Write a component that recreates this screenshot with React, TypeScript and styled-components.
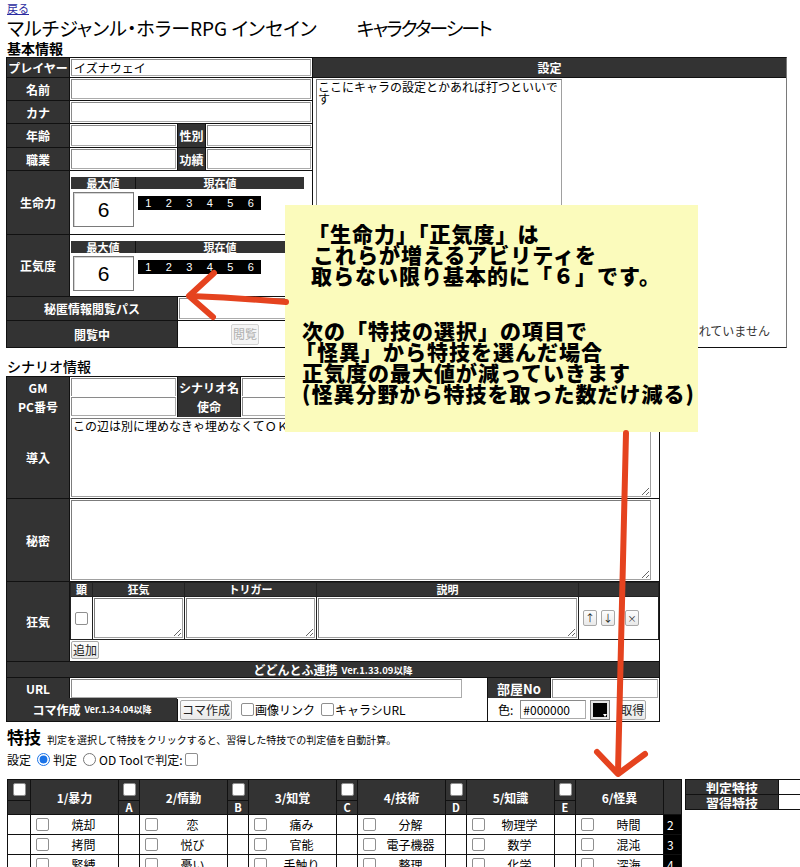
import React from "react";
import styled, { createGlobalStyle } from "styled-components";

const GlobalStyle = createGlobalStyle`
  html, body { margin: 0; padding: 0; overflow: hidden; background: #fff; }
  body {
    font-family: "Noto Sans CJK JP", "Noto Sans", "Liberation Sans", sans-serif;
    font-size: 12px;
    color: #000;
  }
  *, *::before, *::after { box-sizing: border-box; }
  input, textarea, button { font-family: inherit; }
`;

const Page = styled.div`
  position: relative;
  width: 800px;
  height: 867px;
  overflow: hidden;
  padding-left: 6px;
`;

const BackLink = styled.a`
  display: block;
  width: max-content;
  margin-left: 1px;
  font-size: 11px;
  line-height: 17px;
  color: #2b2ba0;
  text-decoration: underline;
`;

const Title = styled.h1`
  margin: 0 0 0 1px;
  font-size: 19px;
  font-weight: 400;
  line-height: 22px;
  font-feature-settings: "palt";
  white-space: pre;
`;

const TitleSub = styled.span`
  margin-left: 40px;
  letter-spacing: -2px;
`;

const SectionHeading = styled.h2<{ $top?: number; $weight?: number; $lh?: number }>`
  margin: ${(p) => p.$top ?? 0}px 0 0 1px;
  font-size: 14px;
  font-weight: ${(p) => p.$weight ?? 700};
  line-height: ${(p) => p.$lh ?? 18}px;
`;

/* ---------- shared cells & controls ---------- */

const Label = styled.div<{ $span?: number; $size?: number }>`
  grid-column: span ${(p) => p.$span ?? 1};
  background: #333;
  color: #fff;
  font-weight: 700;
  font-size: ${(p) => p.$size ?? 12}px;
  display: flex;
  align-items: center;
  justify-content: center;
  white-space: nowrap;
  overflow: hidden;
`;

const Field = styled.div<{ $span?: number; $pad?: string; $center?: boolean }>`
  grid-column: span ${(p) => p.$span ?? 1};
  background: #fff;
  padding: ${(p) => p.$pad ?? "1px"};
  display: flex;
  align-items: ${(p) => (p.$center ? "center" : "stretch")};
  justify-content: ${(p) => (p.$center ? "center" : "flex-start")};
  min-width: 0;
`;

const TextInput = styled.input<{ $w?: number }>`
  width: ${(p) => (p.$w ? `${p.$w}px` : "100%")};
  height: 100%;
  margin: 0;
  padding: 0 2px;
  font-size: 12px;
  color: #000;
  background: #fff;
  border: 1px solid #ababab;
  border-top-color: #8a8a8a;
  border-left-color: #8a8a8a;
  outline: none;
`;

const TextArea = styled.textarea<{ $w?: number }>`
  width: ${(p) => (p.$w ? `${p.$w}px` : "100%")};
  height: 100%;
  margin: 0;
  padding: 1px;
  font-size: 12px;
  line-height: 12px;
  color: #000;
  background: #fff;
  border: 1px solid #a0a0a0;
  border-top-color: #7c7c7c;
  border-left-color: #7c7c7c;
  outline: none;
`;

const Btn = styled.button<{ $w?: number; $h?: number; $size?: number }>`
  width: ${(p) => (p.$w ? `${p.$w}px` : "auto")};
  height: ${(p) => p.$h ?? 19}px;
  margin: 0;
  padding: 0 1px;
  font-size: ${(p) => p.$size ?? 12}px;
  line-height: 1;
  white-space: nowrap;
  color: #222;
  background: linear-gradient(#fdfdfd, #e9e9e9);
  border: 1px solid #a8a8a8;
  border-radius: 2px;
  flex: none;
  &:disabled {
    color: #b0b0b0;
    border-color: #d2d2d2;
    background: #f5f5f5;
  }
`;

const Check = styled.input.attrs({ type: "checkbox" })`
  appearance: none;
  width: 13px;
  height: 13px;
  margin: 0;
  border: 1px solid #8f8f8f;
  border-radius: 2px;
  background: #fff;
  flex: none;
`;

const Radio = styled.input.attrs({ type: "radio" })`
  width: 13px;
  height: 13px;
  margin: 0 3px 0 6px;
  accent-color: #1a73e8;
  flex: none;
`;

const CheckLabel = styled.label<{ $gap?: number }>`
  display: inline-flex;
  align-items: center;
  gap: 1px;
  margin-left: ${(p) => p.$gap ?? 0}px;
  font-size: 12px;
  white-space: nowrap;
`;

const Small = styled.span<{ $size?: number }>`
  font-size: ${(p) => p.$size ?? 9.5}px;
  margin-left: 4px;
`;

/* ---------- 基本情報 ---------- */

const BasicSheet = styled.div`
  display: flex;
  width: 781px;
`;

const BasicGrid = styled.div`
  display: grid;
  width: 307px;
  grid-template-columns: 62px 107px 27px 1fr;
  grid-template-rows: 19px 22px 22px 23px 22px 63px 61px 23px 26px;
  gap: 1px;
  background: #111;
  border: 1px solid #111;
`;

const SettingPanel = styled.div`
  flex: 1;
  display: flex;
  flex-direction: column;
  border: 1px solid #111;
  border-left: none;
  border-right-color: #7a7a7a;
`;

const PanelHead = styled.div`
  height: 20px;
  flex: none;
  background: #333;
  color: #fff;
  font-weight: 700;
  display: flex;
  align-items: center;
  justify-content: center;
  border-bottom: 1px solid #111;
`;

const PanelBody = styled.div`
  flex: 1;
  display: flex;
  padding: 1px 0 1px 3px;
`;

const NoImage = styled.div`
  flex: 1;
  display: flex;
  align-items: flex-end;
  justify-content: flex-end;
  padding: 0 16px 7px 0;
  color: #333;
  font-size: 12px;
`;

const StatTable = styled.div`
  display: grid;
  width: 233px;
  grid-template-columns: 64px 1fr;
  grid-template-rows: 12px 38px;
`;

const StatHead = styled.div`
  background: #333;
  color: #fff;
  font-weight: 700;
  font-size: 11px;
  line-height: 12px;
  text-align: center;
  & + & {
    border-left: 1px solid #111;
  }
`;

const ValueBox = styled.div`
  margin: 3px 1px 0 2px;
  height: 35px;
  border: 1px solid #7a7a7a;
  box-shadow: inset 1px 1px 0 #d5d5d5;
  display: flex;
  align-items: center;
  justify-content: center;
  font-family: "Liberation Sans", sans-serif;
  font-size: 21px;
`;

const Track = styled.div`
  display: flex;
  width: 123px;
  height: 14px;
  margin: 7px 0 0 3px;
  background: #000;
  color: #fff;
  font-family: "Liberation Sans", sans-serif;
  font-size: 11px;
  line-height: 14px;
`;

const Pip = styled.span`
  flex: 1;
  text-align: center;
`;

/* ---------- シナリオ情報 ---------- */

const ScenarioTable = styled.div`
  width: 654px;
  display: flex;
  flex-direction: column;
  gap: 1px;
  background: #111;
  border: 1px solid #111;
`;

const SRow = styled.div<{ $cols: string; $h: number }>`
  display: grid;
  grid-template-columns: ${(p) => p.$cols};
  gap: 1px;
  height: ${(p) => p.$h}px;
`;

const BandHead = styled.div`
  height: 15px;
  background: #333;
  color: #fff;
  font-weight: 700;
  font-size: 12px;
  display: flex;
  align-items: center;
  justify-content: center;
`;

const KyokiField = styled.div`
  background: #fff;
  display: flex;
  flex-direction: column;
  align-items: flex-start;
  gap: 1px;
`;

const KyokiTable = styled.div`
  width: 100%;
  display: grid;
  grid-template-columns: 21px 91px 131px 261px 1fr;
  grid-template-rows: 13px 42px;
  gap: 1px;
  background: #222;
  border: 1px solid #222;
`;

const KHead = styled.div`
  background: #333;
  color: #fff;
  font-weight: 700;
  font-size: 11px;
  line-height: 13px;
  text-align: center;
`;

const KCell = styled.div<{ $center?: boolean }>`
  background: #fff;
  padding: 1px;
  display: flex;
  align-items: ${(p) => (p.$center ? "center" : "stretch")};
  justify-content: ${(p) => (p.$center ? "center" : "flex-start")};
`;

const MoveCell = styled.div`
  background: #fff;
  display: flex;
  align-items: center;
  gap: 4px;
  padding-left: 4px;
`;

const KomaContent = styled.div`
  background: #fff;
  display: flex;
  align-items: center;
  padding-left: 2px;
`;

const ColorCell = styled.div`
  background: #fff;
  display: flex;
  align-items: center;
  padding-left: 10px;
  font-size: 12px;
`;

const Swatch = styled.span`
  position: relative;
  display: inline-flex;
  width: 20px;
  height: 20px;
  margin-left: 4px;
  padding: 2px;
  background: #e4e4e4;
  border: 1px solid #7d7d7d;
  &::before {
    content: "";
    flex: 1;
    background: #000;
  }
  &::after {
    content: "";
    position: absolute;
    right: 2px;
    bottom: 2px;
    border-left: 2px solid transparent;
    border-right: 2px solid transparent;
    border-top: 3px solid #fff;
  }
`;

/* ---------- 特技 ---------- */

const SkillsHead = styled.div`
  display: flex;
  align-items: baseline;
  margin: 5px 0 0 1px;
  line-height: 20px;
`;

const SkillsTitle = styled.span`
  font-size: 17px;
  font-weight: 700;
`;

const SkillsNote = styled.span`
  margin-left: 6px;
  font-size: 10px;
`;

const ModeRow = styled.div`
  display: flex;
  align-items: center;
  height: 18px;
  margin-left: 1px;
  font-size: 12px;
`;

const SkillArea = styled.div`
  display: flex;
  align-items: flex-start;
  gap: 3px;
  margin: 11px 0 0 1px;
`;

const SkillGrid = styled.div`
  display: grid;
  grid-template-columns: 22px 87px 20px 87px 20px 87px 20px 87px 20px 87px 20px 87px 17px;
  grid-template-rows: 20px 13px repeat(3, 19px);
  gap: 1px;
  background: #111;
  border: 1px solid #111;
`;

const FieldHead = styled.div`
  grid-row: span 2;
  background: #333;
  color: #fff;
  font-weight: 700;
  font-size: 12px;
  display: flex;
  align-items: center;
  justify-content: center;
`;

const GapHead = styled.div`
  background: #333;
  display: flex;
  justify-content: center;
  padding-top: 3px;
`;

const LetterHead = styled.div`
  background: #333;
  color: #fff;
  font-weight: 700;
  font-size: 11px;
  line-height: 13px;
  text-align: center;
`;

const BlankCell = styled.div`
  background: #fff;
`;

const SkillCell = styled.div`
  background: #fff;
  display: flex;
  align-items: center;
  padding-left: 5px;
  font-size: 12px;
`;

const SkillName = styled.span`
  flex: 1;
  text-align: center;
  white-space: nowrap;
`;

const RowNo = styled.div`
  background: #000;
  color: #fff;
  font-size: 12px;
  padding-left: 3px;
  line-height: 19px;
`;

const JudgeGrid = styled.div`
  display: grid;
  grid-template-columns: 92px 60px;
  grid-template-rows: 14px 14px;
  gap: 1px;
  background: #111;
  border: 1px solid #111;
`;

/* ---------- annotation layer ---------- */

const Callout = styled.div`
  position: absolute;
  left: 285px;
  top: 205px;
  width: 413px;
  height: 227px;
  padding: 18px 0 0 17px;
  background: #fbfbbc;
  color: #000;
  font-size: 21px;
  font-weight: 900;
  line-height: 21px;
  letter-spacing: 1px;
`;

const CalloutBlock = styled.div<{ $gap?: number }>`
  margin-top: ${(p) => p.$gap ?? 0}px;
`;

const CalloutLine = styled.div<{ $indent?: number }>`
  white-space: pre;
  margin-left: ${(p) => p.$indent ?? 0}px;
`;

const Marks = styled.svg`
  position: absolute;
  left: 0;
  top: 0;
  pointer-events: none;
`;

const fields = [
  { head: "1/暴力", letter: "", items: ["焼却", "拷問", "緊縛"] },
  { head: "2/情動", letter: "A", items: ["恋", "悦び", "憂い"] },
  { head: "3/知覚", letter: "B", items: ["痛み", "官能", "手触り"] },
  { head: "4/技術", letter: "C", items: ["分解", "電子機器", "整理"] },
  { head: "5/知識", letter: "D", items: ["物理学", "数学", "化学"] },
  { head: "6/怪異", letter: "E", items: ["時間", "混沌", "深海"] },
];

function Stat() {
  return (
    <Field $span={3} $pad="6px 0 0 1px">
      <StatTable>
        <StatHead>最大値</StatHead>
        <StatHead>現在値</StatHead>
        <ValueBox>6</ValueBox>
        <div>
          <Track>
            {[1, 2, 3, 4, 5, 6].map((n) => (
              <Pip key={n}>{n}</Pip>
            ))}
          </Track>
        </div>
      </StatTable>
    </Field>
  );
}

export default function App() {
  return (
    <>
      <GlobalStyle />
      <Page>
        <BackLink href="#">戻る</BackLink>
        <Title>
          マルチジャンル・ホラーRPG インセイン
          <TitleSub>キャラクターシート</TitleSub>
        </Title>
        <SectionHeading>基本情報</SectionHeading>

        <BasicSheet>
          <BasicGrid>
            <Label>プレイヤー</Label>
            <Field $span={3}>
              <TextInput defaultValue="イズナウェイ" />
            </Field>
            <Label>名前</Label>
            <Field $span={3}>
              <TextInput />
            </Field>
            <Label>カナ</Label>
            <Field $span={3}>
              <TextInput />
            </Field>
            <Label>年齢</Label>
            <Field>
              <TextInput />
            </Field>
            <Label>性別</Label>
            <Field>
              <TextInput />
            </Field>
            <Label>職業</Label>
            <Field>
              <TextInput />
            </Field>
            <Label>功績</Label>
            <Field>
              <TextInput />
            </Field>
            <Label>生命力</Label>
            <Stat />
            <Label>正気度</Label>
            <Stat />
            <Label $span={2}>秘匿情報閲覧パス</Label>
            <Field $span={2}>
              <TextInput />
            </Field>
            <Label $span={2}>閲覧中</Label>
            <Field $span={2} $center>
              <Btn $h={21} disabled>
                閲覧
              </Btn>
            </Field>
          </BasicGrid>

          <SettingPanel>
            <PanelHead>設定</PanelHead>
            <PanelBody>
              <TextArea $w={246} defaultValue="ここにキャラの設定とかあれば打つといいです" />
              <NoImage>画像が登録されていません</NoImage>
            </PanelBody>
          </SettingPanel>
        </BasicSheet>

        <SectionHeading $top={8} $weight={500} $lh={20}>
          シナリオ情報
        </SectionHeading>
        <ScenarioTable>
          <SRow $cols="62px 107px 62px 1fr" $h={18}>
            <Label>GM</Label>
            <Field>
              <TextInput />
            </Field>
            <Label>シナリオ名</Label>
            <Field>
              <TextInput />
            </Field>
          </SRow>
          <SRow $cols="62px 107px 62px 1fr" $h={20}>
            <Label>PC番号</Label>
            <Field>
              <TextInput />
            </Field>
            <Label>使命</Label>
            <Field>
              <TextInput />
            </Field>
          </SRow>
          <SRow $cols="62px 1fr" $h={81}>
            <Label>導入</Label>
            <Field $pad="1px 8px 1px 1px">
              <TextArea defaultValue="この辺は別に埋めなきゃ埋めなくてＯＫ" />
            </Field>
          </SRow>
          <SRow $cols="62px 1fr" $h={82}>
            <Label>秘密</Label>
            <Field $pad="1px 8px 1px 1px">
              <TextArea />
            </Field>
          </SRow>
          <SRow $cols="62px 1fr" $h={79}>
            <Label>狂気</Label>
            <KyokiField>
              <KyokiTable>
                <KHead>顕</KHead>
                <KHead>狂気</KHead>
                <KHead>トリガー</KHead>
                <KHead>説明</KHead>
                <KHead />
                <KCell $center>
                  <Check />
                </KCell>
                <KCell>
                  <TextArea />
                </KCell>
                <KCell>
                  <TextArea />
                </KCell>
                <KCell>
                  <TextArea />
                </KCell>
                <MoveCell>
                  <Btn $w={14} $h={16} $size={10}>
                    ↑
                  </Btn>
                  <Btn $w={14} $h={16} $size={10}>
                    ↓
                  </Btn>
                  <Btn $w={14} $h={16} $size={9} style={{ marginLeft: 6 }}>
                    ×
                  </Btn>
                </MoveCell>
              </KyokiTable>
              <Btn $h={18} style={{ marginLeft: 1 }}>
                追加
              </Btn>
            </KyokiField>
          </SRow>
          <BandHead>
            どどんとふ連携<Small>Ver.1.33.09以降</Small>
          </BandHead>
          <SRow $cols="62px 1fr 62px 108px" $h={19}>
            <Label>URL</Label>
            <Field $pad="1px 25px 1px 1px">
              <TextInput />
            </Field>
            <Label $size={13}>部屋No</Label>
            <Field>
              <TextInput />
            </Field>
          </SRow>
          <SRow $cols="170px 1fr 171px" $h={23}>
            <Label>
              コマ作成<Small $size={9}>Ver.1.34.04以降</Small>
            </Label>
            <KomaContent>
              <Btn $h={20}>コマ作成</Btn>
              <CheckLabel $gap={9}>
                <Check />
                画像リンク
              </CheckLabel>
              <CheckLabel $gap={6}>
                <Check />
                キャラシURL
              </CheckLabel>
            </KomaContent>
            <ColorCell>
              色:
              <TextInput $w={66} defaultValue="#000000" style={{ height: 19, marginLeft: 7 }} />
              <Swatch />
              <Btn $h={20} style={{ marginLeft: 8 }}>
                取得
              </Btn>
            </ColorCell>
          </SRow>
        </ScenarioTable>

        <SkillsHead>
          <SkillsTitle>特技</SkillsTitle>
          <SkillsNote>判定を選択して特技をクリックすると、習得した特技での判定値を自動計算。</SkillsNote>
        </SkillsHead>
        <ModeRow>
          設定
          <Radio name="mode" defaultChecked />
          判定
          <Radio name="mode" />
          OD Toolで判定:
          <Check style={{ marginLeft: 3 }} />
        </ModeRow>

        <SkillArea>
          <SkillGrid>
            {fields.map((f) => (
              <React.Fragment key={f.head}>
                <GapHead>
                  <Check />
                </GapHead>
                <FieldHead>{f.head}</FieldHead>
              </React.Fragment>
            ))}
            <FieldHead />
            {fields.map((f) => (
              <LetterHead key={`l-${f.head}`}>{f.letter}</LetterHead>
            ))}
            {[0, 1, 2].map((row) => (
              <React.Fragment key={row}>
                {fields.map((f) => (
                  <React.Fragment key={f.head}>
                    <BlankCell />
                    <SkillCell>
                      <Check />
                      <SkillName>{f.items[row]}</SkillName>
                    </SkillCell>
                  </React.Fragment>
                ))}
                <RowNo>{row + 2}</RowNo>
              </React.Fragment>
            ))}
          </SkillGrid>
          <JudgeGrid>
            <Label $size={13}>判定特技</Label>
            <BlankCell />
            <Label $size={13}>習得特技</Label>
            <BlankCell />
          </JudgeGrid>
        </SkillArea>

        <Callout>
          <CalloutBlock>
            <CalloutLine $indent={6}>「生命力」「正気度」は</CalloutLine>
            <CalloutLine $indent={11}>これらが増えるアビリティを</CalloutLine>
            <CalloutLine $indent={9}>取らない限り基本的に「６」です。</CalloutLine>
          </CalloutBlock>
          <CalloutBlock $gap={34}>
            <CalloutLine>次の「特技の選択」の項目で</CalloutLine>
            <CalloutLine $indent={-7}>「怪異」から特技を選んだ場合</CalloutLine>
            <CalloutLine>正気度の最大値が減っていきます</CalloutLine>
            <CalloutLine>(怪異分野から特技を取った数だけ減る)</CalloutLine>
          </CalloutBlock>
        </Callout>

        <Marks width={800} height={867} viewBox="0 0 800 867">
          <g fill="none" stroke="#e5431f" strokeWidth={6} strokeLinecap="round" strokeLinejoin="round">
            <path d="M286 302 Q240 298 190 296" />
            <path d="M214 273 L189 296 L213 317" />
            <path d="M626 433 L618 772" />
            <path d="M597 752 L618 774 L645 754" />
          </g>
        </Marks>
      </Page>
    </>
  );
}
